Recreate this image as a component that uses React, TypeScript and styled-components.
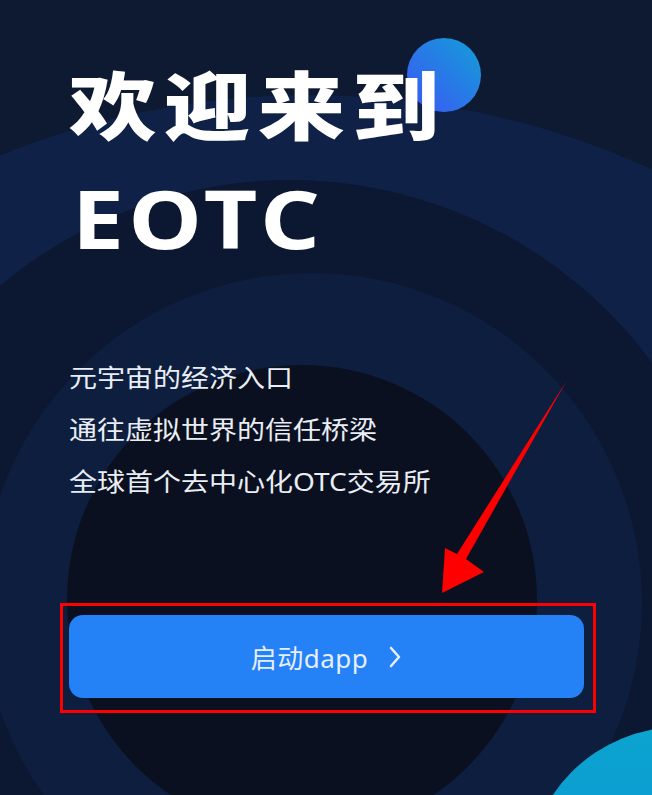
import React from 'react';
import styled, { createGlobalStyle } from 'styled-components';

const GlobalStyle = createGlobalStyle`
  html, body {
    margin: 0;
    padding: 0;
    background: #0e1932;
  }
  body {
    font-family: "Noto Sans", "Noto Sans CJK SC", sans-serif;
  }
`

const Page = styled.div`
  position: relative;
  width: 652px;
  height: 795px;
  overflow: hidden;
  background: #0e1932;
`

const Backdrop = styled.svg`
  position: absolute;
  left: 0;
  top: 0;
  z-index: 0;
`

const Overlay = styled.svg`
  position: absolute;
  left: 0;
  top: 0;
  z-index: 2;
  pointer-events: none;
`

const Content = styled.div`
  position: relative;
  z-index: 1;
  display: flex;
  flex-direction: column;
  padding-left: 60px;
`

// the screenshot is stretched sideways, so the big type is widened to match
const Title = styled.h1`
  margin: 56px 0 0 9px;
  font-family: "Noto Sans CJK SC", sans-serif;
  font-weight: 900;
  font-size: 74px;
  line-height: 92px;
  letter-spacing: 6px;
  color: #ffffff;
  transform: scaleX(1.18);
  transform-origin: left center;
`

const Brand = styled.div`
  margin: 30px 0 0 12px;
  font-family: "Noto Sans", sans-serif;
  font-weight: 700;
  font-size: 80px;
  line-height: 80px;
  letter-spacing: 4px;
  color: #ffffff;
  transform: scaleX(1.16);
  transform-origin: left center;
`

const Slogans = styled.div`
  margin: 93px 0 0 9px;
  display: flex;
  flex-direction: column;
`

const Slogan = styled.p`
  margin: 0;
  font-family: "Noto Sans", "Noto Sans CJK SC", sans-serif;
  font-size: 25px;
  line-height: 52px;
  color: #e9edf4;
  transform: scaleX(1.12);
  transform-origin: left center;
`

const ButtonFrame = styled.div`
  margin-top: 96px;
  width: 536px;
  box-sizing: border-box;
  border: 3px solid #ff0000;
  padding: 9px 9px 12px 6px;
`

const LaunchButton = styled.button`
  width: 515px;
  height: 83px;
  border: 0;
  border-radius: 14px;
  background: #2481f6;
  color: #e6eefc;
  display: flex;
  align-items: center;
  justify-content: center;
  gap: 20px;
  font-family: "Noto Sans", "Noto Sans CJK SC", sans-serif;
  font-size: 26px;
  letter-spacing: 0.5px;
  cursor: pointer;
`

const Chevron = () => (
  <svg width="14" height="22" viewBox="0 0 14 22">
    <polyline points="3,2 11,11 3,20" fill="none" stroke="#e6eefc" strokeWidth="2.6" strokeLinecap="round" strokeLinejoin="round" />
  </svg>
)

const Rings = () => (
  <Backdrop width="652" height="795" viewBox="0 0 652 795">
    <defs>
      <linearGradient id="dot" x1="1" y1="0" x2="0" y2="1">
        <stop offset="0" stopColor="#139fd6" />
        <stop offset="1" stopColor="#3d55f7" />
      </linearGradient>
      <linearGradient id="moon" x1="0" y1="0" x2="0" y2="1">
        <stop offset="0" stopColor="#0ca4cf" />
        <stop offset="1" stopColor="#0a8bd8" />
      </linearGradient>
    </defs>
    <ellipse cx="310" cy="680" rx="700" ry="585" fill="#0f2146" />
    <circle cx="290" cy="630" r="450" fill="#0c1731" />
    <circle cx="312" cy="603" r="330" fill="#0e1e3f" />
    <circle cx="302" cy="600" r="235" fill="#0a101f" />
    <circle cx="444" cy="75" r="37" fill="url(#dot)" />
    <circle cx="680" cy="880" r="153" fill="url(#moon)" />
  </Backdrop>
)

const Pointer = () => (
  <Overlay width="652" height="795" viewBox="0 0 652 795">
    <polygon points="567,380 466,559 484,572 442,593 445,548 457,554" fill="#ff0000" />
  </Overlay>
)

export default function App() {
  return (
    <Page>
      <GlobalStyle />
      <Rings />
      <Content>
        <Title>欢迎来到</Title>
        <Brand>EOTC</Brand>
        <Slogans>
          <Slogan>元宇宙的经济入口</Slogan>
          <Slogan>通往虚拟世界的信任桥梁</Slogan>
          <Slogan>全球首个去中心化OTC交易所</Slogan>
        </Slogans>
        <ButtonFrame>
          <LaunchButton>
            <span>启动dapp</span>
            <Chevron />
          </LaunchButton>
        </ButtonFrame>
      </Content>
      <Pointer />
    </Page>
  )
}
